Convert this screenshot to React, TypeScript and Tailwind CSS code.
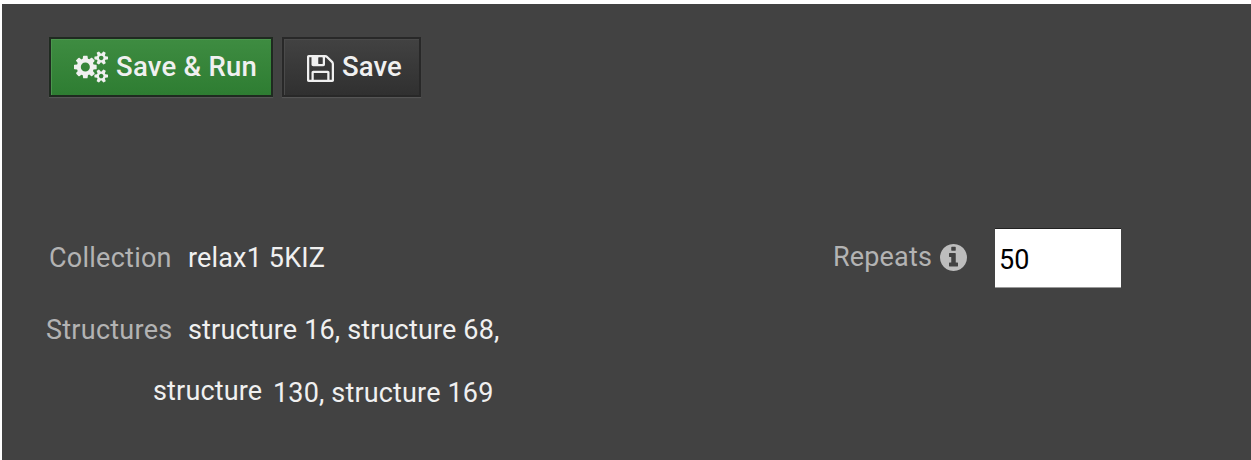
import clsx from "clsx";
import React from "react";

type IconProps = {
  className?: string;
};

const CogsIcon = ({ className }: IconProps) => (
  <svg viewBox="0 0 1920 1792" fill="currentColor" className={className}>
    <path d="M896 896q0-106-75-181t-181-75-181 75-75 181 75 181 181 75 181-75 75-181zm768 512q0-52-38-90t-90-38-90 38-38 90q0 53 37.5 90.5t90.5 37.5 90.5-37.5 37.5-90.5zm0-1024q0-52-38-90t-90-38-90 38-38 90q0 53 37.5 90.5t90.5 37.5 90.5-37.5 37.5-90.5zm-384 421v185q0 10-7 19.5t-16 10.5l-155 24q-11 35-32 76 34 48 90 115 7 11 7 20 0 12-7 19-23 30-82.5 89.5t-78.5 59.5q-11 0-21-7l-115-90q-37 19-77 31-11 108-23 155-7 24-30 24h-186q-11 0-20-7.5t-10-17.5l-23-153q-34-10-75-31l-118 89q-7 7-20 7-11 0-21-8-144-133-144-160 0-9 7-19 10-14 41-53t47-61q-23-44-35-82l-152-24q-10-1-17-9.5t-7-19.5v-185q0-10 7-19.5t16-10.5l155-24q11-35 32-76-34-48-90-115-7-11-7-20 0-12 7-20 22-30 82-89t79-59q11 0 21 7l115 90q34-18 77-32 11-108 23-154 7-24 30-24h186q11 0 20 7.5t10 17.5l23 153q34 10 75 31l118-89q8-7 20-7 11 0 21 8 144 133 144 160 0 8-7 19-12 16-42 54t-45 60q23 48 34 82l152 23q10 2 17 10.5t7 19.5zm640 533v140q0 16-149 31-12 27-30 52 51 113 51 138 0 4-4 7-122 71-124 71-8 0-46-47t-52-68q-20 2-30 2t-30-2q-14 21-52 68t-46 47q-2 0-124-71-4-3-4-7 0-25 51-138-18-25-30-52-149-15-149-31v-140q0-16 149-31 13-29 30-52-51-113-51-138 0-4 4-7 4-2 35-20t59-34 30-16q8 0 46 46.5t52 67.5q20-2 30-2t30 2q51-71 92-112l6-2q4 0 124 70 4 3 4 7 0 25-51 138 17 23 30 52 149 15 149 31zm0-1024v140q0 16-149 31-12 27-30 52 51 113 51 138 0 4-4 7-122 71-124 71-8 0-46-47t-52-68q-20 2-30 2t-30-2q-14 21-52 68t-46 47q-2 0-124-71-4-3-4-7 0-25 51-138-18-25-30-52-149-15-149-31v-140q0-16 149-31 13-29 30-52-51-113-51-138 0-4 4-7 4-2 35-20t59-34 30-16q8 0 46 46.5t52 67.5q20-2 30-2t30 2q51-71 92-112l6-2q4 0 124 70 4 3 4 7 0 25-51 138 17 23 30 52 149 15 149 31z" />
  </svg>
);

const FloppyIcon = ({ className }: IconProps) => (
  <svg viewBox="0 128 1536 1536" fill="currentColor" className={className}>
    <path d="M384 1536h768v-384h-768v384zM1280 1536h128v-896q0-14-10-38.5t-20-34.5l-281-281q-10-10-34-20t-39-10v416q0 40-28 68t-68 28h-576q-40 0-68-28t-28-68v-416h-128v1280h128v-416q0-40 28-68t68-28h832q40 0 68 28t28 68v416zM896 608v-320q0-13-9.5-22.5t-22.5-9.5h-192q-13 0-22.5 9.5t-9.5 22.5v320q0 13 9.5 22.5t22.5 9.5h192q13 0 22.5-9.5t9.5-22.5zM1536 640v928q0 40-28 68t-68 28h-1344q-40 0-68-28t-28-68v-1344q0-40 28-68t68-28h928q40 0 88 20t76 48l280 280q28 28 48 76t20 88z" />
  </svg>
);

const InfoIcon = ({ className }: IconProps) => (
  <svg viewBox="128 128 1536 1536" fill="currentColor" className={className}>
    <path d="M1152 1376v-160q0-14-9-23t-23-9h-96v-512q0-14-9-23t-23-9h-320q-14 0-23 9t-9 23v160q0 14 9 23t23 9h96v320h-96q-14 0-23 9t-9 23v160q0 14 9 23t23 9h448q14 0 23-9t9-23zM1024 480v-160q0-14-9-23t-23-9h-192q-14 0-23 9t-9 23v160q0 14 9 23t23 9h192q14 0 23-9t9-23zM1664 896q0 209-103 385.5t-279.5 279.5-385.5 103-385.5-103-279.5-279.5-103-385.5 103-385.5 279.5-279.5 385.5-103 385.5 103 279.5 279.5 103 385.5z" />
  </svg>
);

type ButtonProps = {
  className?: string;
  children: React.ReactNode;
};

const Button = ({ className, children }: ButtonProps) => (
  <button
    type="button"
    className={clsx(
      "flex h-[60px] items-center border-2 bg-gradient-to-b font-medium text-[#f0f0f0]",
      className
    )}
  >
    {children}
  </button>
);

const App = () => {
  return (
    <div className="h-[460px] w-[1251px] overflow-hidden bg-white pt-1 pl-[2px] font-['Roboto',sans-serif] text-[27px] leading-8 tracking-[0.16px] whitespace-nowrap">
      <div className="h-full bg-[#424242] pt-[33px] pl-[47px]">
        <div className="flex gap-[9px]">
          <Button className="w-[224px] border-[#1f2a20] from-[#3e8c41] to-[#2e7d32] pl-[23px] text-[27.5px] tracking-[0.25px] shadow-[inset_1px_1px_0_#4a964d,0_1px_1px_#555]">
            <CogsIcon className="h-8 w-[34px]" />
            <span className="ml-2">Save &amp; Run</span>
          </Button>
          <Button className="w-[139px] border-[#282828] from-[#424242] to-[#303030] pl-[23px] text-[27.5px] tracking-[0.1px] shadow-[inset_1px_1px_0_#4a4a4a,0_1px_1px_#555]">
            <FloppyIcon className="mt-0.5 size-[27px]" />
            <span className="ml-2">Save</span>
          </Button>
        </div>

        <div className="mt-[131px] flex">
          <div className="w-[784px] pt-[14px] text-[#f0f0f0]">
            <div className="flex">
              <span className="w-[139px] tracking-[0.25px] text-[#b3b3b3]">
                Collection
              </span>
              <span>relax1 5KIZ</span>
            </div>
            <div className="mt-10 -ml-[3px] flex">
              <span className="w-[142px] tracking-[0.25px] text-[#b3b3b3]">
                Structures
              </span>
              <span>structure 16, structure 68,</span>
            </div>
            <div className="mt-[29px] flex pl-[104px]">
              <span className="w-[120px]">structure</span>
              <span className="pt-0.5">130, structure 169</span>
            </div>
          </div>

          <div className="flex h-[60px] items-start">
            <label htmlFor="repeats" className="w-[107px] pt-[13px] text-[#b3b3b3]">
              Repeats
            </label>
            <InfoIcon className="mt-4 size-[27px] text-[#bdbdbd]" />
            <input
              id="repeats"
              type="text"
              defaultValue="50"
              className="ml-7 h-[60px] w-[126px] border-t border-b border-t-[#222] border-b-[#999] bg-white pt-[3px] pl-1 text-black"
            />
          </div>
        </div>
      </div>
    </div>
  );
};

export default App;
